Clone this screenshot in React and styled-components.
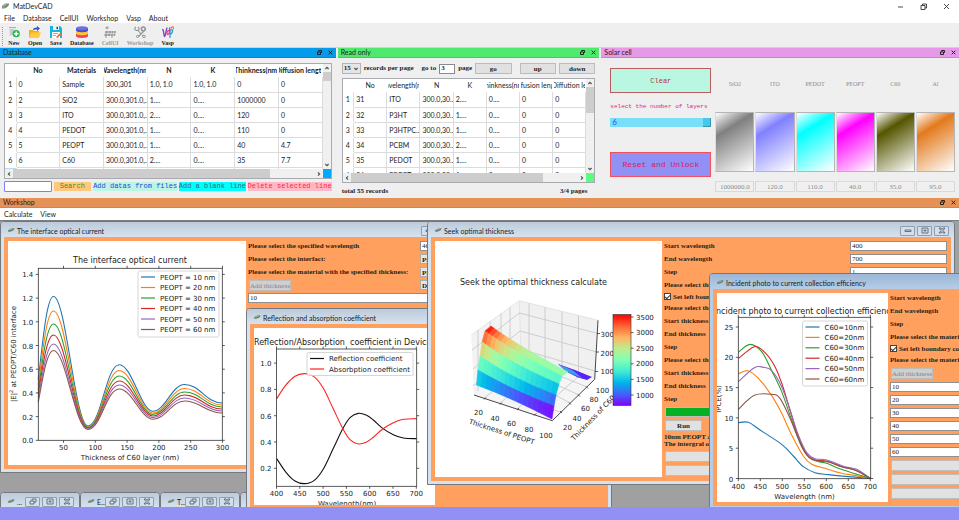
import React from "react";
import styled, { createGlobalStyle, css } from "styled-components";

const ui = `Lato, "Open Sans", sans-serif`;
const serif = `"Liberation Serif", serif`;
const mono = `"Liberation Mono", monospace`;
const plot = `"DejaVu Sans", sans-serif`;

const GlobalStyle = createGlobalStyle`
  * { box-sizing: border-box; }
  body { margin: 0; background: #efefef; font-family: ${ui}; font-size: 7px; color: #1c1c1c; }
  button, input, select { margin: 0; padding: 0; border-radius: 0; font: inherit; color: inherit; min-width: 0; }
  svg { display: block; }
`;

/* ---------- application shell ---------- */

const Page = styled.div`
  display: flex;
  flex-direction: column;
  min-height: 100vh;
  overflow: hidden;
`;

const TitleBar = styled.header`
  display: flex;
  align-items: center;
  gap: 4px;
  height: 12px;
  padding: 0 9px 0 2px;
  background: #fff;
`;

const AppName = styled.h1`
  flex: 1;
  margin: 0;
  font-size: 7px;
  font-weight: 400;
  line-height: 12px;
`;

const SystemButtons = styled.div`
  display: flex;
  gap: 16px;
`;

const PlainButton = styled.button`
  border: 0;
  background: none;
  line-height: 10px;
`;

const MenuBar = styled.nav`
  display: flex;
  align-items: center;
  gap: 8px;
  height: ${(p) => p.$height}px;
  padding: 0 4px;
  background: #fff;
`;

const ToolBar = styled.div`
  display: flex;
  gap: 8px;
  height: 25px;
  padding: 3px 0 0 2px;
  background: #efefef;
  border-bottom: 1px solid #d2d2d2;
`;

const Grip = styled.div`
  width: 1px;
  height: 19px;
  margin: 1px -3px 0 0;
  border-left: 1px dotted #9a9a9a;
`;

const Tool = styled.button`
  display: flex;
  flex-direction: column;
  align-items: center;
  gap: 1px;
  border: 0;
  background: none;
  font: 700 6px/8px ${serif};
  color: ${(p) => (p.disabled ? "#9a9a9a" : "#222")};
`;

const Docks = styled.main`
  display: grid;
  grid-template-columns: 336fr 262fr 358fr;
  gap: 2px;
  min-height: 150px;
`;

const Dock = styled.section`
  display: flex;
  flex-direction: column;
  min-width: 0;
`;

const DockTitle = styled.header`
  display: flex;
  align-items: center;
  gap: 6px;
  height: 10px;
  padding: 0 3px;
  background: ${(p) => p.$color};
  border-bottom: 1px solid ${(p) => p.$edge || "#00000022"};

  h2 { flex: 1; margin: 0; font-size: 7px; font-weight: 400; line-height: 9px; color: #222; }
`;

const DockBody = styled.div`
  display: flex;
  flex-direction: column;
  gap: ${(p) => p.$gap}px;
  padding: 5px 4px 0;
`;

/* ---------- tables ---------- */

const TableFrame = styled.div`
  display: grid;
  grid-template-columns: minmax(0, 1fr) 8px;
  grid-template-rows: ${(p) => p.$height}px 9px;
  border: 1px solid #a9abb0;
  background: #fff;
`;

const Viewport = styled.div`
  overflow: hidden;
`;

const Grid = styled.table`
  width: 100%;
  table-layout: fixed;
  border-collapse: collapse;
  font-size: 7px;
  line-height: 14px;

  th, td {
    height: 15px;
    padding: 0 0 0 2px;
    overflow: hidden;
    white-space: nowrap;
    text-align: left;
    border-right: 1px solid #dcdcdc;
    border-bottom: 1px solid #dcdcdc;
    color: #222;
  }
  thead th {
    height: 13px;
    padding: 0;
    border: 0;
    line-height: 13px;
    font-weight: ${(p) => (p.$bold ? 700 : 400)};
  }
  tbody th {
    padding: 0;
    text-align: center;
    font-weight: 400;
    border-bottom-color: #fff;
  }
  th:first-child { width: 11px; }
  tbody tr:nth-child(7) th { background: #b8dcf0; }
`;

const HeadText = styled.span`
  display: flex;
  justify-content: center;
  margin: 0 1px;
  overflow: hidden;
`;

const ScrollBar = styled.div`
  display: flex;
  flex-direction: ${(p) => (p.$vertical ? "column" : "row")};
  align-items: center;
  justify-content: space-between;
  background: #f0f0f0;
`;

const Thumb = styled.div`
  background: #cdcdcd;
  ${(p) =>
    p.$vertical
      ? css`width: 100%; flex: 0 0 ${p.$size}%; margin: 0 0 auto;`
      : css`height: 100%; flex: 0 0 ${p.$size}%; margin: 0 auto 0 0;`}
`;

const Corner = styled.div`
  background: ${(p) => p.$color};
`;

function Chevron({ turn = 0 }) {
  return (
    <svg width="8" height="8" viewBox="0 0 8 8" fill="none" stroke="#555" strokeWidth="1.2">
      <path d="M2.4 5 4 3.4 5.6 5" transform={`rotate(${turn} 4 4)`} />
    </svg>
  );
}

function DataTable({ heads, rows, bold, height, corner, vSize, hSize }) {
  return (
    <TableFrame $height={height}>
      <Viewport>
        <Grid $bold={bold}>
          <thead>
            <tr>
              <th />
              {heads.map((h, i) => (
                <th key={i}><HeadText>{h}</HeadText></th>
              ))}
            </tr>
          </thead>
          <tbody>
            {rows.map((r, i) => (
              <tr key={i}>
                <th scope="row">{i + 1}</th>
                {r.map((c, j) => <td key={j}>{c}</td>)}
              </tr>
            ))}
          </tbody>
        </Grid>
      </Viewport>
      <ScrollBar $vertical>
        <Chevron />
        <Thumb $vertical $size={vSize} />
        <Chevron turn={180} />
      </ScrollBar>
      <ScrollBar>
        <Chevron turn={-90} />
        <Thumb $size={hSize} />
        <Chevron turn={90} />
      </ScrollBar>
      <Corner $color={corner} />
    </TableFrame>
  );
}

/* ---------- database and read-only docks ---------- */

const ActionRow = styled.div`
  display: grid;
  grid-template-columns: 48fr 38fr 85fr 67fr 85fr;
  gap: 2px;
  height: 11px;
`;

const SearchInput = styled.input`
  width: 100%;
  background: #fff;
  border: 1px solid #7d7dff;
  border-radius: 1px;
`;

const ActionButton = styled.button`
  display: flex;
  align-items: center;
  justify-content: center;
  margin: 1px 0;
  border: 0;
  background: ${(p) => p.$bg};
  color: ${(p) => p.$fg};
  font: 400 7px/9px ${mono};
  white-space: nowrap;
`;

const PagerRow = styled.div`
  display: flex;
  align-items: center;
  gap: 3px;
  height: 11px;
  font: 700 7px/11px ${serif};
  white-space: nowrap;
`;

const PerPage = styled.div`
  display: flex;
  align-items: center;
  width: 19px;
  height: 11px;
  background: #e5e5e5;
  border: 1px solid #b4b4b4;

  select { flex: 1; appearance: none; border: 0; background: none; padding-left: 1px; line-height: 9px; }
`;

const PageInput = styled.input`
  width: 16px;
  height: 10px;
  padding-left: 1px;
  background: #fff;
  border: 1px solid #8a8a8a;
`;

const PagerButton = styled.button`
  flex: 1;
  height: 11px;
  margin-left: ${(p) => p.$push || 0}px;
  background: #e1e1e1;
  border: 1px solid #bcbcbc;
  line-height: 8px;
`;

const Spacer = styled.span`
  width: 2px;
`;

const FootRow = styled.div`
  display: flex;
  justify-content: space-between;
  padding-right: 8px;
  font: 700 7px/8px ${serif};
`;

/* ---------- solar cell dock ---------- */

const SolarBody = styled.div`
  display: grid;
  grid-template-columns: 101fr 240fr;
  gap: 4px;
  padding: 10px 4px 0 9px;
`;

const SolarControls = styled.div`
  display: flex;
  flex-direction: column;
`;

const BigButton = styled.button`
  height: 25px;
  border: 1px solid ${(p) => p.$edge};
  background: ${(p) => p.$bg};
  color: ${(p) => p.$fg};
  font: 400 ${(p) => p.$size}px/12px ${mono};
`;

const LayersLabel = styled.label`
  margin: 8px 0 6px;
  color: #e0218a;
  font: 400 6px/11px ${mono};
  white-space: nowrap;
`;

const LayersSelect = styled.div`
  display: flex;
  height: 9px;
  margin-bottom: 25px;
  background: #79dff8;

  select { flex: 1; appearance: none; border: 0; background: none; padding-left: 2px; color: #1f4fff; font: 400 8px/9px ${ui}; }
  span { width: 8px; background: #46c8ee; border-right: 1px solid #3a93ad; border-bottom: 1px solid #3a93ad; }
`;

const Layers = styled.div`
  display: grid;
  grid-template-columns: repeat(6, 1fr);
  gap: 1px;
`;

const Layer = styled.div`
  display: flex;
  flex-direction: column;
  min-width: 0;

  label { margin: 11px 0 23px; text-align: center; color: #8c8c8c; font: 400 6px/10px ${serif}; }
  input { width: 100%; height: 11px; margin-top: 9px; text-align: center; color: #8c8c8c; background: #f0f0f0; border: 1px solid #d9d9d9; font: 400 7px/9px ${serif}; }
`;

const Swatch = styled.div`
  height: 60px;
  border: 1px solid #b5b5b5;
  border-left-color: #dcdcdc;
  background: linear-gradient(148deg, #fff 0%, ${(p) => p.$color} 29%, #fff 100%);
`;

/* ---------- workshop ---------- */

const Canvas = styled.div`
  position: relative;
  flex: 1;
  min-height: 287px;
  overflow: hidden;
  background: #a0a0a0;
  border-top: 1px solid #7d7d7d;
`;

const StatusStrip = styled.footer`
  height: 13px;
  background: #9191f5;
`;

const Frame = styled.section`
  position: absolute;
  left: ${(p) => p.$x}px;
  top: ${(p) => p.$y}px;
  width: ${(p) => p.$w}px;
  height: ${(p) => p.$h}px;
  display: flex;
  flex-direction: column;
  padding: 0 3px 3px;
  border: 1px solid #74797f;
  border-radius: 4px 4px 0 0;
  background: ${(p) => (p.$active ? "#b5cde8" : "#d6e2ef")};
`;

const FrameTitle = styled.header`
  display: flex;
  align-items: center;
  gap: 2px;
  flex: 0 0 15px;
  margin: 0 -3px;
  padding: 2px 5px 0 7px;
  border-radius: 3px 3px 0 0;
  background: ${(p) =>
    p.$active ? "linear-gradient(#9bb6d6, #b5cde8)" : "linear-gradient(#bccada, #d6e2ef)"};

  h3 { flex: 1; min-width: 0; margin: 0; font-size: 7px; font-weight: 400; line-height: 12px; white-space: nowrap; }
`;

const FrameButton = styled.button`
  display: flex;
  align-items: center;
  justify-content: center;
  width: 15px;
  height: 10px;
  border: 1px solid #8f9db0;
  border-radius: 1px;
  background: #d3dfec;
`;

const FrameBody = styled.div`
  display: flex;
  flex: 1;
  min-height: 0;
  gap: 2px;
  padding: 4px;
  overflow: hidden;
  background: #ffa05f;
`;

const Figure = styled.svg`
  flex: none;
  background: #fff;
  font-family: ${plot};
  font-size: 7px;
  fill: #222;
`;

const Form = styled.form`
  display: flex;
  flex-direction: column;
  flex: 1;
  gap: 3px;
  min-width: 0;
  font: 700 7px/10px ${serif};
  color: #2a1d12;
  white-space: nowrap;
`;

const Field = styled.div`
  display: grid;
  grid-template-columns: minmax(0, 1fr) ${(p) => p.$control}px;
  height: 10px;

  label { overflow: hidden; }
  input, select { width: 100%; height: 10px; }
`;

const TextInput = styled.input`
  width: 100%;
  height: 10px;
  padding-left: 1px;
  background: #fff;
  border: 1px solid #8f8f8f;
  font-weight: 400;
`;

const Picker = styled.select`
  appearance: none;
  background: #e5e5e5;
  border: 1px solid #adadad;
  padding-left: 1px;
`;

const CheckRow = styled.label`
  display: flex;
  align-items: center;
  gap: 2px;
  height: 7px;

  input { appearance: none; width: 7px; height: 7px; border: 1px solid #444; background: #fff; display: grid; place-items: center; }
  input:checked::after { content: ""; width: 4px; height: 2px; border-left: 1px solid #333; border-bottom: 1px solid #333; transform: rotate(-45deg); }
`;

const FormButton = styled.button`
  flex: none;
  align-self: ${(p) => (p.$wide ? "stretch" : "flex-start")};
  width: ${(p) => (p.$wide ? "auto" : `${p.$w}px`)};
  height: 11px;
  margin-left: 1px;
  border: 1px solid #bdbdbd;
  background: ${(p) => (p.disabled ? "#cfcfcf" : "#e1e1e1")};
  color: ${(p) => (p.disabled ? "#858585" : "#222")};
  font-weight: ${(p) => (p.disabled ? 400 : 700)};
  line-height: 8px;
`;

const Progress = styled.div`
  height: 10px;
  margin-left: 1px;
  background: #06b025;
  border: 1px solid #bcbcbc;
`;

const ResultText = styled.p`
  margin: 0;
  line-height: 7px;
`;

/* ---------- icons ---------- */

function Chip() {
  return (
    <svg width="7" height="6" viewBox="0 0 7 6">
      <path d="M0 3 3 .8 7 .5 6.6 2.6 3.8 5 .3 5.4Z" fill="#5d7f5d" />
      <path d="M0 3 3 .8 7 .5 3.4 3Z" fill="#93b48c" />
      <path d="M.3 5.4 3.8 5 3.4 3 0 3.2Z" fill="#8f9598" />
    </svg>
  );
}

function SmallChip() {
  return (
    <svg width="7" height="6" viewBox="0 0 7 6">
      <path d="M0 2.6 2.6.7 6.5.3 5.8 1.900 3 3.400 .3 3.800Z" fill="#5f7a52" />
      <path d="M.5 2.400 2.800 1 5.800.6 3 2.200Z" fill="#9db58c" />
    </svg>
  );
}

function DockButtons() {
  return (
    <>
      <PlainButton aria-label="Float">
        <svg width="5" height="5" viewBox="0 0 5 5" fill="none" stroke="#222">
          <path d="M1.5 1.5V.5h3v2h-1M.5 2h3v2.5h-3z" />
        </svg>
      </PlainButton>
      <PlainButton aria-label="Close">
        <svg width="5" height="5" viewBox="0 0 5 5" stroke="#222"><path d="m.7.7 3.6 3.6M4.3.7.7 4.3" /></svg>
      </PlainButton>
    </>
  );
}

const toolIcons = {
  New: (
    <>
      <path d="M1 2h7v8H1z" fill="#e4e7e9" />
      <path d="M1 1.5h7M2 4h4M2 6h3M2 8h3" stroke="#9aa3a8" strokeWidth=".8" />
      <circle cx="8.2" cy="7.7" r="3.6" fill="#25b84c" />
      <path d="M8.2 5.5v4.400M6 7.7h4.400" stroke="#fff" strokeWidth="1.4" />
    </>
  ),
  Open: (
    <>
      <path d="M0 4h4l1 1h5v6.5H0z" fill="#f2ad19" />
      <path d="M2 6.5h10l-2 5H0z" fill="#ffcb3d" />
      <path d="M4 4c0-2 2-2.6 4-2.5V0l3 2.5L8 5V3.5C6 3.3 5 3.5 4 4z" fill="#3950c8" />
    </>
  ),
  Save: (
    <>
      <path d="M0 0h10l2 2v10H0z" fill="#17b6dc" />
      <path d="M3 0h6v4H3z" fill="#e8f8fc" />
      <path d="M6.5.7H8v2.5H6.5z" fill="#1a4f87" />
      <path d="M2 6h8v6H2z" fill="#fff" />
      <path d="M3 7.5h5M3 9.5h3" stroke="#58a9c8" strokeWidth=".8" />
      <path d="m6 11 4.5-4.5 1.3 1.3L7.5 12z" fill="#f46a2a" />
    </>
  ),
  Database: (
    <>
      <path d="M0 8v2c0 2.6 12 2.6 12 0V8z" fill="#ef4466" />
      <path d="M0 5v2.3c0 2.6 12 2.6 12 0V5z" fill="#ffc431" />
      <path d="M0 2v2.3c0 2.6 12 2.6 12 0V2z" fill="#4b50c8" />
      <ellipse cx="6" cy="2.2" rx="6" ry="2" fill="#6b6fe0" />
    </>
  ),
  CellUI: (
    <>
      <circle cx="3" cy="1.8" r="1.5" fill="#a7a7a7" />
      <path d="M1.5 5H12l-1 5H.3z" fill="#989898" />
      <path d="M1 7.5h11M4.5 5l-1 5M7.5 5l-1 5M10 5 9 10" stroke="#e4e4e4" strokeWidth=".7" />
      <path d="M2 10v2M8 10v2" stroke="#989898" />
    </>
  ),
  Workshop: (
    <g fill="none" stroke="#929292">
      <path d="M2 .8.9 2v1.5l1.5 1h1.500L5 3.5V2L4 .8M4 4.5l5 5.5M9.5 5.5l-5 5" strokeWidth="1.1" />
      <circle cx="9.3" cy="3" r="1.900" strokeWidth="1.5" />
      <circle cx="3.6" cy="10.4" r="1.1" />
      <circle cx="10" cy="10.4" r="1.3" />
    </g>
  ),
  Vasp: (
    <g fill="none" strokeWidth="1.3" strokeLinecap="round">
      <path d="M.8 3.5C2 5 1.5 9 2.5 10.5 4 9 3.5 5 5 2" stroke="#7a3fc0" />
      <path d="M6.5 4.5C4.5 5 4.5 9 6 8.5S8 4 7.5 2" stroke="#e63a8a" />
      <path d="M8 11.5V5c1-2 3-1.5 2.5.5S9 8 8.5 8" stroke="#2e9ad8" />
      <path d="M9 2c1-2 2.5-1 2.5.5" stroke="#f06a3a" />
    </g>
  ),
};

/* ---------- plots ---------- */

const palette = ["#1f77b4", "#ff7f0e", "#2ca02c", "#d62728", "#9467bd", "#8c564b"];

function spline(pts) {
  let d = `M${pts[0][0]} ${pts[0][1]}`;
  for (let i = 0; i < pts.length - 1; i++) {
    const a = pts[i - 1] || pts[i];
    const b = pts[i];
    const c = pts[i + 1];
    const e = pts[i + 2] || c;
    d += `C${b[0] + (c[0] - a[0]) / 6} ${b[1] + (c[1] - a[1]) / 6} ${c[0] - (e[0] - b[0]) / 6} ${c[1] - (e[1] - b[1]) / 6} ${c[0]} ${c[1]}`;
  }
  return d;
}

function Axes({ x0, y0, x1, y1, xt, yt }) {
  return (
    <g>
      <g stroke="#333" strokeWidth=".8" fill="none">
        <rect x={x0} y={y0} width={x1 - x0} height={y1 - y0} />
        {xt.map(([x]) => <path key={x} d={`M${x} ${y1}v2.5M${x} ${y0}v-2.5`} />)}
        {yt.map(([y]) => <path key={y} d={`M${x0} ${y}h-2.5M${x1} ${y}h2.5`} />)}
      </g>
      {xt.map(([x, t]) => <text key={t} x={x} y={y1 + 10} textAnchor="middle">{t}</text>)}
      {yt.map(([y, t]) => <text key={t} x={x0 - 5} y={y + 3} textAnchor="end">{t}</text>)}
    </g>
  );
}

function Legend({ x, y, w, h, step, items, colors }) {
  return (
    <g>
      <rect x={x} y={y} width={w} height={h} rx="1.5" fill="#fff" fillOpacity=".85" stroke="#ccc" strokeWidth=".8" />
      {items.map((t, i) => (
        <g key={t}>
          <path d={`M${x + 3} ${y + 6 + i * step}h14`} stroke={colors[i]} strokeWidth="1.2" />
          <text x={x + 22} y={y + 8.5 + i * step}>{t}</text>
        </g>
      ))}
    </g>
  );
}

const currentCurves = [
  [380, 296.5, 426, 364.7, 411.3, 384.5, 403],
  [385, 311, 426.7, 370.5, 413, 388.5, 405],
  [390, 324, 427.4, 376, 414.5, 392, 407],
  [394, 335, 428, 381, 416, 395, 409],
  [398, 344, 428.8, 385, 417.6, 398, 411],
  [402, 350.5, 429.5, 389, 419.3, 401, 413],
];

function CurrentPlot() {
  const path = ([s, a, b, c, d, e, f]) =>
    `M38.3 ${s}C43 ${(s + a) / 2} 47 ${a} 53.5 ${a}C66 ${a} 75 ${b} 88 ${b}C101 ${b} 106 ${c} 119.3 ${c}C132 ${c} 141 ${d} 153 ${d}C165 ${d} 172 ${e} 184.5 ${e}C200 ${e} 206 ${f} 222 ${f}`;
  return (
    <Figure width="238" height="224" viewBox="8 241 238 224">
      <text x="130" y="263" textAnchor="middle" fontSize="8">The interface optical current</text>
      <g fill="none" strokeWidth="1.1">
        {currentCurves.map((c, i) => <path key={i} d={path(c)} stroke={palette[i]} />)}
      </g>
      <Axes
        x0={38.3} y0={268.3} x1={222.3} y1={440.3}
        xt={[50, 100, 150, 200, 250, 300].map((v, i) => [63.5 + i * 31.8, v])}
        yt={["0.0", "0.2", "0.4", "0.6", "0.8", "1.0", "1.2", "1.4"].map((v, i) => [440.3 - i * 23.7, v])}
      />
      <text x="130" y="460" textAnchor="middle">Thickness of C60 layer (nm)</text>
      <text transform="translate(16 354) rotate(-90)" textAnchor="middle">
        |E|<tspan dy="-3" fontSize="5">2</tspan><tspan dy="3"> at PEOPT/C60 interface</tspan>
      </text>
      <Legend x={138} y={271} w={81} h={66} step={10.5} colors={palette}
        items={[10, 20, 30, 40, 50, 60].map((v) => `PEOPT = ${v} nm`)} />
    </Figure>
  );
}

const reflection = [
  [110, 296], [138, 337], [165, 363], [193, 371], [222, 362], [250, 327], [280, 265], [309, 205],
  [330, 173], [355, 160], [380, 166], [400, 180], [428, 205], [460, 224], [490, 234], [530, 236],
].map(([u, v]) => [240 + u / 3, 360 + v / 3]);

function ReflectionPlot() {
  return (
    <Figure width="181" height="177" viewBox="254 328 181 177">
      <text x="254" y="345" fontSize="8">Reflection/Absorbption{"\u00a0 "}coefficient in Device</text>
      <g fill="none" strokeWidth="1.1">
        <path d={spline(reflection)} stroke="#111" />
        <path d={spline(reflection.map(([x, y]) => [x, 857.3 - y]))} stroke="#f22" />
      </g>
      <Axes
        x0={276.5} y0={349} x1={416.7} y1={486.3}
        xt={[400, 450, 500, 550, 600, 650, 700].map((v, i) => [276.5 + i * 23.3, v])}
        yt={["0.2", "0.4", "0.6", "0.8", "1.0"].map((v, i) => [468.3 - i * 26.3, v])}
      />
      <text x="347" y="506" textAnchor="middle">Wavelength(nm)</text>
      <Legend x={307} y={352.5} w={106} h={23} step={10.5} colors={["#111", "#f22"]}
        items={["Reflection coefficient", "Absorbption coefficient"]} />
    </Figure>
  );
}

const hex = (v) => Math.round(Math.min(1, Math.max(0, v)) * 255);
const rainbow = (t) =>
  `rgb(${hex(Math.abs(2 * t - 0.5))},${hex(Math.sin(Math.PI * t))},${hex(Math.cos((Math.PI * t) / 2))})`;

const ridge = {
  left: [[476.5, 385], [478, 370], [480, 356], [482, 342], [485, 331], [491, 326]],
  mid: [[513, 400], [514, 389], [515, 377], [517, 364], [519, 353], [523, 347]],
  right: [[552, 419], [554, 406], [556, 395], [559, 384], [562, 376], [568, 372]],
  tone: [[0.3, 0.13, 0.02], [0.46, 0.3, 0.13], [0.7, 0.42, 0.27], [0.88, 0.56, 0.42], [0.99, 0.63, 0.55]],
};
const quad = (a, b, c, u) => a * (1 - u) * (1 - 2 * u) + 4 * b * u * (1 - u) + c * u * (2 * u - 1);

function Surface() {
  const at = (v, u) => [0, 1].map((k) => quad(ridge.left[v][k], ridge.mid[v][k], ridge.right[v][k], u));
  const cells = [];
  const n = 16;
  for (let v = 4; v >= 0; v--) {
    for (let i = 0; i < n; i++) {
      const pts = [at(v, i / n), at(v, (i + 1) / n), at(v + 1, (i + 1) / n), at(v + 1, i / n)];
      const fill = rainbow(quad(...ridge.tone[v], (i + 0.5) / n));
      cells.push(<polygon key={`${v}-${i}`} points={pts.join(" ")} fill={fill} stroke={fill} strokeWidth=".6" />);
    }
  }
  return <g>{cells}</g>;
}

function SurfacePlot() {
  return (
    <Figure width="227" height="236" viewBox="435 241 227 236">
      <defs>
        <linearGradient id="bar" x1="0" y1="1" x2="0" y2="0">
          {[0, 0.125, 0.25, 0.375, 0.5, 0.625, 0.75, 0.875, 1].map((t) => (
            <stop key={t} offset={t} stopColor={rainbow(t)} />
          ))}
        </linearGradient>
      </defs>
      <text x="533.5" y="285" textAnchor="middle" fontSize="8">Seek the optimal thickness calculate</text>
      <path d="M471.3 335 519.3 300.7 521 358 474 395z" fill="#f3f3f3" />
      <path d="M519.3 300.7 598 320.3 594.7 379.3 521 358z" fill="#f0f0f0" />
      <path d="M474 395 521 358 594.7 379.3 552.3 420.7z" fill="#f5f5f5" />
      <g fill="none" stroke="#c4c4c4" strokeWidth=".8">
        <path d="M471.3 335 519.3 300.7 598 320.3M519.3 300.7 521 358" stroke="#dedede" />
        <path d="M472 350 519.3 313 598 333.5M473 369 520 331 597 352M473 386 520.5 349 595 371" />
        <path d="M478 330v61M490 321.5v60M501 313.5v60M510 307.5v58" />
        <path d="M529 303.3v57M545 307.3v58M562 311.5v58M578.5 315.6v58" />
        <path d="M484 398 532 361M500 403 547 366M517 409 563 370M535 415 580 375M560 412 486 386M570 403 510 370M579 395 515 366M587 387 521 360" />
      </g>
      <path d="M474 395 552.3 420.7 594.7 379.3 598 320.3" fill="none" stroke="#333" strokeWidth=".9" />
      <path d="M486 397.5l-2 2M502 402.5l-2 2M519 408l-2 2M536 413.5l-2 2M560 411l2 2M569 402.5l2 2M578 394.5l2 2M586 386.5l2 2M595 371.5h3M596 352h3M597 333.5h3" stroke="#333" strokeWidth=".8" />
      <path d="M558 364 575 370 592 377 587 380 578 377.5 567 372z" fill="#5a22fb" />
      <path d="M558 364 573 370.5 582 378 567 372z" fill="#3c9de8" />
      <Surface />
      <g textAnchor="middle">
        {[[478.5, 415, 20], [495, 421, 40], [511.5, 426, 60], [529, 432, 80], [546, 438, 100],
          [567.5, 430, 20], [577, 421, 40], [585.5, 411, 60], [594, 402, 80], [602.5, 393, 100]].map(([x, y, t]) => (
          <text key={x} x={x} y={y}>{t}</text>
        ))}
        <text transform="translate(501 434) rotate(18)">Thickness of PEOPT</text>
      </g>
      <text transform="translate(574 441) rotate(-46)">Thickness of C60</text>
      <text x="600.5" y="336.5">3000</text>
      <text x="600.5" y="355.5">2000</text>
      <text x="600.5" y="374">1000</text>
      <rect x="613" y="314.5" width="18" height="91" fill="url(#bar)" stroke="#333" strokeWidth=".6" />
      {[3500, 3000, 2500, 2000, 1500, 1000].map((t, i) => (
        <g key={t}>
          <path d={`M631 ${317 + i * 15.6}h2.5`} stroke="#333" strokeWidth=".8" />
          <text x="636" y={319.5 + i * 15.6}>{t}</text>
        </g>
      ))}
    </Figure>
  );
}

const efficiency = [
  [[250, 218], [280, 217], [315, 240], [380, 283], [415, 318], [445, 350], [480, 368], [520, 374], [580, 380], [646, 385]],
  [[250, 72], [278, 62], [310, 85], [350, 137], [380, 190], [410, 255], [445, 318], [470, 343], [510, 355], [560, 370], [600, 376], [646, 385]],
  [[250, 7], [285, -17], [320, 5], [350, 62], [380, 125], [410, 210], [440, 290], [470, 328], [515, 340], [550, 355], [600, 371], [646, 385]],
  [[250, 26], [298, -10], [330, 8], [360, 50], [382, 105], [405, 180], [430, 262], [455, 314], [480, 330], [515, 333], [560, 350], [600, 360], [646, 385]],
  [[250, 95], [298, 53], [325, 52], [350, 62], [380, 110], [405, 180], [430, 255], [455, 308], [480, 326], [515, 330], [570, 350], [605, 358], [646, 385]],
  [[250, 178], [298, 136], [350, 133], [375, 145], [405, 205], [430, 265], [458, 318], [490, 333], [520, 336], [560, 350], [605, 362], [646, 385]],
].map((c) => c.map(([u, v]) => [655 + u / 3, 350 + v / 3]));

function EfficiencyPlot() {
  return (
    <Figure width="171" height="209" viewBox="717 293 171 209">
      <text x="804.5" y="314" textAnchor="middle" fontSize="8">Incident photo to current collection efficiency</text>
      <g fill="none" strokeWidth="1.1">
        {efficiency.map((c, i) => <path key={i} d={spline(c)} stroke={palette[i]} />)}
      </g>
      <Axes
        x0={738.3} y0={317.3} x1={870.7} y1={478.7}
        xt={[400, 450, 500, 550, 600, 650, 700].map((v, i) => [738.3 + i * 22, v])}
        yt={[0, 5, 10, 15, 20, 25].map((v, i) => [478.5 - i * 30.3, v])}
      />
      <text x="804.5" y="498.5" textAnchor="middle">Wavelength (nm)</text>
      <text transform="translate(721 399) rotate(-90)" textAnchor="middle">IPCE(%)</text>
      <Legend x={802.5} y={321} w={65} h={65} step={10.4} colors={palette}
        items={[10, 20, 30, 40, 50, 60].map((v) => `C60=${v}nm`)} />
    </Figure>
  );
}

/* ---------- sub windows ---------- */

const frameGlyphs = {
  Minimize: "M1 3h6v1.5H1z",
  Restore: "M3 2.500V1h4v3H5M1 3h4v3H1z",
  Maximize: "M1 1h6v5H1zM3 3h2v1H3z",
  Close: "M1 1h2l1 1.5L5 1h2L5 3.5 7 6H5L4 4.5 3 6H1l2-2.5z",
};

function SubWindow({ x, y, w, h, title, active, mini, children }) {
  const buttons = mini ? ["Restore", "Maximize", "Close"] : ["Minimize", "Maximize", "Close"];
  return (
    <Frame $x={x} $y={y} $w={w} $h={h} $active={active}>
      <FrameTitle $active={active}>
        <SmallChip />
        <h3>{title}</h3>
        {buttons.map((b) => (
          <FrameButton key={b} aria-label={b}>
            <svg width="8" height="7" viewBox="0 0 8 7" fill="none" stroke="#5b6672" strokeWidth=".9">
              <path d={frameGlyphs[b]} />
            </svg>
          </FrameButton>
        ))}
      </FrameTitle>
      {children && <FrameBody>{children}</FrameBody>}
    </Frame>
  );
}

function LabeledInput({ id, label, value, control = 97 }) {
  return (
    <Field $control={control}>
      <label htmlFor={id}>{label}</label>
      {value !== undefined && <TextInput id={id} defaultValue={value} />}
    </Field>
  );
}

function LabeledPicker({ id, label, value, control = 97 }) {
  return (
    <Field $control={control}>
      <label htmlFor={id}>{label}</label>
      <Picker id={id}><option>{value}</option></Picker>
    </Field>
  );
}

/* ---------- data ---------- */

const dbHeads = ["No", "Materials", "Wavelength(nm)", "N", "K", "Thinkness(nm)", "Diffusion length"];
const wave = "300.0,301.0,...";
const dbRows = [
  ["0", "Sample", "300,301", "1.0, 1.0", "1.0, 1.0", "0", "0"],
  ["2", "SiO2", wave, "1....", "0....", "1000000", "0"],
  ["3", "ITO", wave, "2....", "0....", "120", "0"],
  ["4", "PEDOT", wave, "1....", "0....", "110", "0"],
  ["5", "PEOPT", wave, "1....", "0....", "40", "4.7"],
  ["6", "C60", wave, "2....", "0....", "35", "7.7"],
  ["", "", "", "", "", "", ""],
];
const roHeads = ["No", "Wavelength(nm)", "N", "K", "Thinkness(nm)", "Diffusion length", "Diffution le"];
const roRows = [
  ["31", "ITO", "2...."], ["32", "P3HT", "1...."], ["33", "P3HTPC...", "1...."],
  ["34", "PCBM", "2...."], ["35", "PEDOT", "1...."], ["36", "PEOPT", "1...."],
].map(([n, m, k]) => [n, m, "300.0,30...", k, "0....", "0", "0"]);

const layers = [
  ["SiO2", "#808080", "1000000.0"],
  ["ITO", "#8080ff", "120.0"],
  ["PEDOT", "#00ffff", "110.0"],
  ["PEOPT", "#ff00ff", "40.0"],
  ["C60", "#555500", "35.0"],
  ["Al", "#e27a1c", "95.0"],
];

const material = "Please select the material with the specified thickness:";

export default function App() {
  return (
    <Page>
      <GlobalStyle />
      <TitleBar>
        <Chip />
        <AppName>MatDevCAD</AppName>
        <SystemButtons>
          {[["Minimize", "M1 4h5"], ["Restore", "M1 2.5h4v4H1zM2.5 2.5V1h4v4H5"], ["Close", "m1 1 5 5M6 1 1 6"]].map(([n, d]) => (
            <PlainButton key={n} aria-label={n}>
              <svg width="7" height="7" viewBox="0 0 7 7" fill="none" stroke="#333" strokeWidth=".9"><path d={d} /></svg>
            </PlainButton>
          ))}
        </SystemButtons>
      </TitleBar>
      <MenuBar $height={11}>
        {["File", "Database", "CellUI", "Workshop", "Vasp", "About"].map((m) => <PlainButton key={m}>{m}</PlainButton>)}
      </MenuBar>
      <ToolBar>
        <Grip />
        {Object.keys(toolIcons).map((t) => (
          <Tool key={t} disabled={t === "CellUI" || t === "Workshop"}>
            <svg width="12" height="12" viewBox="0 0 12 12">{toolIcons[t]}</svg>
            {t}
          </Tool>
        ))}
      </ToolBar>

      <Docks>
        <Dock>
          <DockTitle $color="#049beb"><h2>Database</h2><DockButtons /></DockTitle>
          <DockBody $gap={2}>
            <DataTable heads={dbHeads} rows={dbRows} bold height={105} corner="#00aaff" vSize={9} hSize={81} />
            <ActionRow>
              <SearchInput aria-label="Search text" />
              <ActionButton $bg="#ffc87d" $fg="#3f8f1f">Search</ActionButton>
              <ActionButton $bg="#bdf5e4" $fg="#1f45e0">Add datas from files</ActionButton>
              <ActionButton $bg="#00ffff" $fg="#376d6d">Add a blank line</ActionButton>
              <ActionButton $bg="#ffb9c6" $fg="#ff1f3c">Delete selected line</ActionButton>
            </ActionRow>
          </DockBody>
        </Dock>

        <Dock>
          <DockTitle $color="#4fe970"><h2>Read only</h2><DockButtons /></DockTitle>
          <DockBody $gap={4}>
            <PagerRow>
              <PerPage>
                <select id="per" defaultValue="15"><option>15</option></select>
                <Chevron turn={180} />
              </PerPage>
              <label htmlFor="per">records per page</label>
              <Spacer />
              <label htmlFor="goto">go to</label>
              <PageInput id="goto" defaultValue="3" />
              <span>page</span>
              <PagerButton>go</PagerButton>
              <PagerButton $push={5}>up</PagerButton>
              <PagerButton>down</PagerButton>
            </PagerRow>
            <DataTable heads={roHeads} rows={roRows} height={94} corner="#55ff7f" vSize={28} hSize={79} />
            <FootRow><span>total 55 records</span><span>3/4 pages</span></FootRow>
          </DockBody>
        </Dock>

        <Dock>
          <DockTitle $color="#e699e6" $edge="#cf7fd2"><h2>Solar cell</h2><DockButtons /></DockTitle>
          <SolarBody>
            <SolarControls>
              <BigButton $bg="#baf7e3" $edge="#b85c5c" $fg="#b03a3a" $size={7}>Clear</BigButton>
              <LayersLabel htmlFor="count">select the number of layers</LayersLabel>
              <LayersSelect><select id="count" defaultValue="6"><option>6</option></select><span /></LayersSelect>
              <BigButton $bg="#9191f5" $edge="#f0505f" $fg="#d81b60" $size={8}>Reset and Unlock</BigButton>
            </SolarControls>
            <Layers>
              {layers.map(([name, color, value]) => (
                <Layer key={name}>
                  <label htmlFor={name}>{name}</label>
                  <Swatch $color={color} />
                  <input id={name} defaultValue={value} />
                </Layer>
              ))}
            </Layers>
          </SolarBody>
        </Dock>
      </Docks>

      <DockTitle $color="#e69155" $edge="#d88347"><h2>Workshop</h2><DockButtons /></DockTitle>
      <MenuBar $height={12}>
        <PlainButton>Calculate</PlainButton>
        <PlainButton>View</PlainButton>
      </MenuBar>

      <Canvas>
        <SubWindow x={0} y={271} w={80} h={20} title="..." mini />
        <SubWindow x={80} y={271} w={80} h={20} title="E..." mini />
        <SubWindow x={160} y={271} w={80} h={20} title="T..." mini />
        <SubWindow x={240} y={271} w={80} h={20} title="" mini />

        <SubWindow x={0} y={0} w={476} h={252} title="The interface optical current">
          <CurrentPlot />
          <Form>
            <LabeledInput id="w1" label="Please select the specified wavelength" value="460" control={48} />
            <LabeledPicker id="w2" label="Please select the interfact:" value="PEOPT/C60" control={48} />
            <LabeledPicker id="w3" label={material} value="PEOPT" control={48} />
            <Field $control={48}>
              <FormButton type="button" $w={42} disabled>Add thickness</FormButton>
              <Picker aria-label="Action"><option>Delete</option></Picker>
            </Field>
            <TextInput aria-label="Thickness" defaultValue="10" />
          </Form>
        </SubWindow>

        <SubWindow x={246} y={87} w={366} h={205} title="Reflection and absorption coefficient">
          <ReflectionPlot />
        </SubWindow>

        <SubWindow x={427} y={0} w={528} h={264} title="Seek optimal thickness">
          <SurfacePlot />
          <Form>
            <LabeledInput id="s1" label="Start wavelength" value="400" />
            <LabeledInput id="s2" label="End wavelength" value="700" />
            <LabeledInput id="s3" label="Step" value="1" />
            <LabeledInput label={material} />
            <CheckRow><input type="checkbox" defaultChecked />Set left boundary conditions</CheckRow>
            <LabeledInput label={material} />
            <LabeledInput label="Start thickness" />
            <LabeledInput label="End thickness" />
            <LabeledInput label="Step" />
            <LabeledInput label={material} />
            <LabeledInput label="Start thickness" />
            <LabeledInput label="End thickness" />
            <LabeledInput label="Step" />
            <Progress role="progressbar" aria-label="Progress" aria-valuenow={100} />
            <FormButton type="button" $w={37}>Run</FormButton>
            <ResultText>10nm PEOPT and<br />The intergral of</ResultText>
            <FormButton type="button" $wide aria-label="Save figure" />
            <FormButton type="button" $wide aria-label="Save data" />
          </Form>
        </SubWindow>

        <SubWindow x={709} y={52} w={440} h={237} title="Incident photo to current collection efficiency" active>
          <EfficiencyPlot />
          <Form>
            <LabeledInput label="Start wavelength" />
            <LabeledInput label="End wavelength" />
            <LabeledInput label="Step" />
            <LabeledInput label={material} />
            <CheckRow><input type="checkbox" defaultChecked />Set left boundary conditions</CheckRow>
            <LabeledInput label={material} />
            <FormButton type="button" $w={42} disabled>Add thickness</FormButton>
            {[10, 20, 30, 40, 50, 60].map((v) => (
              <TextInput key={v} aria-label={`Thickness ${v}`} defaultValue={v} />
            ))}
            <FormButton type="button" $wide aria-label="Run" />
            <FormButton type="button" $wide aria-label="Save figure" />
            <FormButton type="button" $wide aria-label="Save data" />
          </Form>
        </SubWindow>
      </Canvas>
      <StatusStrip />
    </Page>
  );
}
